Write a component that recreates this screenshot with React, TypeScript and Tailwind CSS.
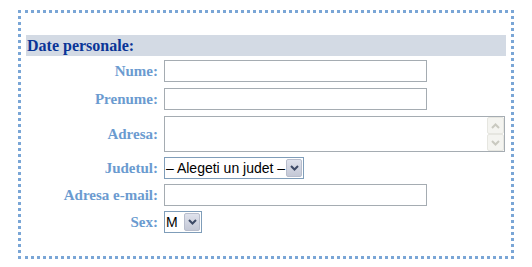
import React from "react";

const labelCls =
  "w-[135px] shrink-0 text-right pr-[3px] text-[15px] font-bold text-[#6b9bd0] leading-none";

function Chevron({ up = false, color = "#333" }: { up?: boolean; color?: string }) {
  return (
    <svg width="9" height="6" viewBox="0 0 9 6" className="block">
      <path
        d={up ? "M1 5 L4.5 1.5 L8 5" : "M1 1 L4.5 4.5 L8 1"}
        fill="none"
        stroke={color}
        strokeWidth="2"
      />
    </svg>
  );
}

function TextInput() {
  return <div className="h-[22px] w-[263px] border border-[#a5acb2] bg-white" />;
}

function Select({ text, width }: { text: string; width: string }) {
  return (
    <div
      className={`${width} h-[22px] border border-[#7f9db9] bg-white flex items-stretch`}
    >
      <div className="flex-1 flex items-center pl-[1px] text-[14px] text-black leading-none font-['Liberation_Sans',Arial,sans-serif] whitespace-nowrap overflow-hidden">
        {text}
      </div>
      <div className="w-[16px] my-[1px] mr-[1px] bg-gradient-to-b from-[#dfe2ec] to-[#c4c8d6] border border-[#b8bdcc] rounded-[2px] flex items-center justify-center">
        <Chevron color="#3d4a66" />
      </div>
    </div>
  );
}

function Row({
  label,
  children,
  className = "",
}: {
  label: string;
  children: React.ReactNode;
  className?: string;
}) {
  return (
    <div className={`flex items-center ${className}`}>
      <div className={labelCls}>{label}</div>
      <div className="pl-[3px]">{children}</div>
    </div>
  );
}

export default function App() {
  return (
    <div className="w-[532px] h-[267px] bg-white pt-[10px] pl-[18px] font-['Liberation_Serif','Times_New_Roman',serif]">
      <div className="w-[496px] h-[249px] border-[3px] border-dotted border-[#7aa6d6] pt-[22px] pl-[5px]">
        <div className="w-[480px] h-[21px] bg-[#d3dae4] flex items-center pl-[1px] text-[16px] font-bold text-[#0a3597] leading-none">
          Date personale:
        </div>
        <div className="flex flex-col gap-[5px] mt-[4px]">
          <Row label="Nume:">
            <TextInput />
          </Row>
          <Row label="Prenume:" className="mt-[1px]">
            <TextInput />
          </Row>
          <Row label="Adresa:" className="mt-[1px]">
            <div className="h-[36px] w-[341px] border border-[#a5acb2] bg-white flex justify-end">
              <div className="w-[17px] flex flex-col">
                <div className="h-[17px] bg-[#f4f4f0] border border-[#e6e6e0] rounded-[2px] flex items-center justify-center">
                  <Chevron up color="#c9c9c0" />
                </div>
                <div className="h-[17px] bg-[#f4f4f0] border border-[#e6e6e0] rounded-[2px] flex items-center justify-center">
                  <Chevron color="#c9c9c0" />
                </div>
              </div>
            </div>
          </Row>
          <Row label="Judetul:">
            <Select text="– Alegeti un judet –" width="w-[140px]" />
          </Row>
          <Row label="Adresa e-mail:">
            <TextInput />
          </Row>
          <Row label="Sex:">
            <Select text="M" width="w-[38px]" />
          </Row>
        </div>
      </div>
    </div>
  );
}
